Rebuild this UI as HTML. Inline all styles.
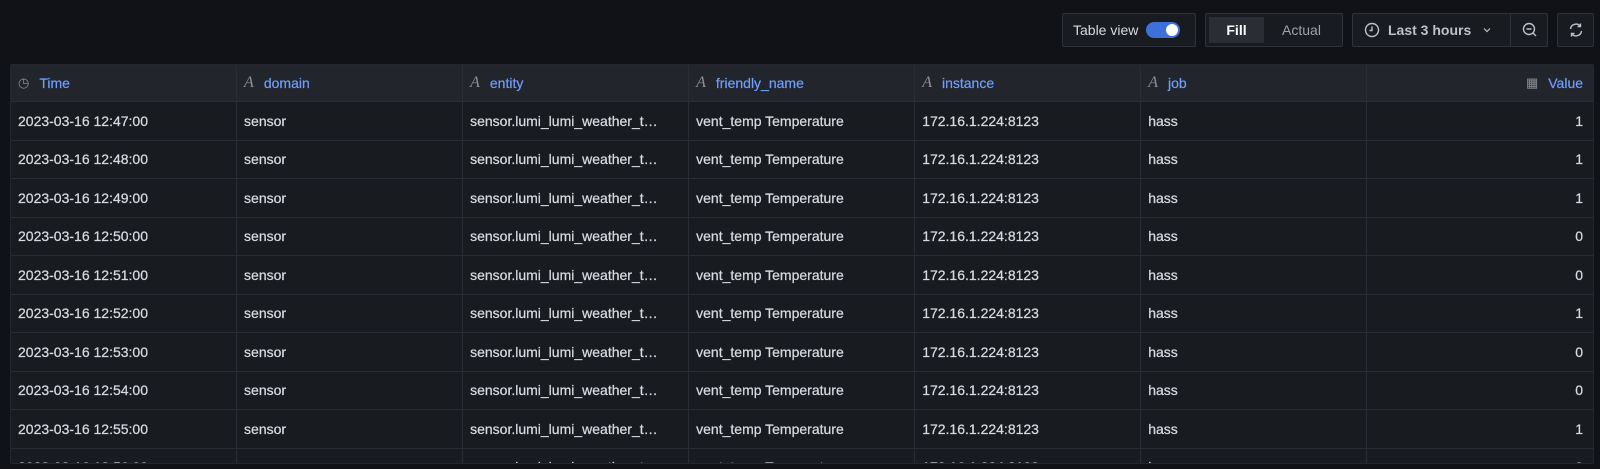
<!DOCTYPE html>
<html><head><style>
*{box-sizing:border-box;margin:0;padding:0}
body{width:1600px;height:469px;background:#111217;font-family:"Liberation Sans",sans-serif;color:#ccccdc;overflow:hidden;position:relative}
.ctl{position:absolute;top:13px;height:34px;border:1px solid #2f3238;border-radius:2px;background:#181b1f;display:flex;align-items:center;font-size:14px}
.tbl{position:absolute;left:10px;top:64px;width:1584px;height:400px;background:#181b1f;border:1px solid #24272d;overflow:hidden;border-radius:2px}
.row{display:flex;height:38.5px;border-bottom:1px solid #2a2d33;align-items:center;font-size:14px}
.hdr{height:37px;background:#22252b;color:#6e9fff}
.c{width:226.3px;height:100%;display:flex;align-items:center;padding-left:7px;border-right:1px solid #2a2d33;white-space:nowrap;overflow:hidden;color:#d8d9e0;-webkit-text-stroke:0.25px #d8d9e0}
.hdr .c{color:#6e9fff;-webkit-text-stroke:0.2px #6e9fff}
.c:last-child{border-right:none;justify-content:flex-end;padding-right:10px;width:226px}
.ic{color:#8e8e9a;font-style:italic;font-family:"Liberation Serif",serif;font-size:16px;margin-right:10px;-webkit-text-stroke:0}
</style></head><body>
<div class="ctl" style="left:1062px;width:134px;padding-left:10px;color:#d8d9e0">Table view
<span style="margin-left:8px;width:34px;height:16px;border-radius:8px;background:#3d71d9;position:relative;display:inline-block"><span style="position:absolute;right:2px;top:2px;width:12px;height:12px;border-radius:6px;background:#fff"></span></span></div>
<div class="ctl" style="left:1205px;width:138px;padding:3px">
<span style="width:55px;height:26px;background:#2a2d33;display:flex;align-items:center;justify-content:center;color:#fff;font-weight:bold">Fill</span>
<span style="flex:1;text-align:center;color:#9fa1ab">Actual</span></div>
<div class="ctl" style="left:1352px;width:196px;color:#bfc1ca">
<svg width="16" height="16" viewBox="0 0 16 16" style="margin:0 8px 0 11px"><circle cx="8" cy="8" r="6.5" fill="none" stroke="#bfc1ca" stroke-width="1.4"/><path d="M8 4.5V8.5H5.5" fill="none" stroke="#bfc1ca" stroke-width="1.4"/></svg>
<span style="font-weight:bold">Last 3 hours</span><svg width="8" height="6" viewBox="0 0 8 6" style="margin-left:12px"><path d="M1 1.5L4 4.5L7 1.5" fill="none" stroke="#bfc1ca" stroke-width="1.2"/></svg>
<span style="position:absolute;left:157px;top:0;bottom:0;border-left:1px solid #2f3238;width:38px;display:flex;align-items:center;justify-content:center"><svg width="16" height="16" viewBox="0 0 16 16"><circle cx="7" cy="7" r="5.5" fill="none" stroke="#bfc1ca" stroke-width="1.4"/><path d="M4.5 7H9.5M11 11L14 14" stroke="#bfc1ca" stroke-width="1.4"/></svg></span></div>
<div class="ctl" style="left:1557px;width:37px;justify-content:center"><svg width="16" height="16" viewBox="0 0 16 16"><path d="M2.5 7A5.5 5.5 0 0 1 12.5 4.5M13.5 9A5.5 5.5 0 0 1 3.5 11.5M12.5 1.5V4.5H9.5M3.5 14.5V11.5H6.5" fill="none" stroke="#bfc1ca" stroke-width="1.4"/></svg></div>
<div class="tbl">
<div class="row hdr"><div class="c"><span class="ic" style="font-style:normal;font-size:13px">&#9719;</span>Time</div><div class="c"><span class="ic">A</span>domain</div><div class="c"><span class="ic">A</span>entity</div><div class="c"><span class="ic">A</span>friendly_name</div><div class="c"><span class="ic">A</span>instance</div><div class="c"><span class="ic">A</span>job</div><div class="c"><span class="ic" style="font-style:normal;font-size:13px">&#9638;</span>Value</div></div>
<div class="row"><div class="c">2023-03-16 12:47:00</div><div class="c">sensor</div><div class="c">sensor.lumi_lumi_weather_t…</div><div class="c">vent_temp Temperature</div><div class="c">172.16.1.224:8123</div><div class="c">hass</div><div class="c">1</div></div>
<div class="row"><div class="c">2023-03-16 12:48:00</div><div class="c">sensor</div><div class="c">sensor.lumi_lumi_weather_t…</div><div class="c">vent_temp Temperature</div><div class="c">172.16.1.224:8123</div><div class="c">hass</div><div class="c">1</div></div>
<div class="row"><div class="c">2023-03-16 12:49:00</div><div class="c">sensor</div><div class="c">sensor.lumi_lumi_weather_t…</div><div class="c">vent_temp Temperature</div><div class="c">172.16.1.224:8123</div><div class="c">hass</div><div class="c">1</div></div>
<div class="row"><div class="c">2023-03-16 12:50:00</div><div class="c">sensor</div><div class="c">sensor.lumi_lumi_weather_t…</div><div class="c">vent_temp Temperature</div><div class="c">172.16.1.224:8123</div><div class="c">hass</div><div class="c">0</div></div>
<div class="row"><div class="c">2023-03-16 12:51:00</div><div class="c">sensor</div><div class="c">sensor.lumi_lumi_weather_t…</div><div class="c">vent_temp Temperature</div><div class="c">172.16.1.224:8123</div><div class="c">hass</div><div class="c">0</div></div>
<div class="row"><div class="c">2023-03-16 12:52:00</div><div class="c">sensor</div><div class="c">sensor.lumi_lumi_weather_t…</div><div class="c">vent_temp Temperature</div><div class="c">172.16.1.224:8123</div><div class="c">hass</div><div class="c">1</div></div>
<div class="row"><div class="c">2023-03-16 12:53:00</div><div class="c">sensor</div><div class="c">sensor.lumi_lumi_weather_t…</div><div class="c">vent_temp Temperature</div><div class="c">172.16.1.224:8123</div><div class="c">hass</div><div class="c">0</div></div>
<div class="row"><div class="c">2023-03-16 12:54:00</div><div class="c">sensor</div><div class="c">sensor.lumi_lumi_weather_t…</div><div class="c">vent_temp Temperature</div><div class="c">172.16.1.224:8123</div><div class="c">hass</div><div class="c">0</div></div>
<div class="row"><div class="c">2023-03-16 12:55:00</div><div class="c">sensor</div><div class="c">sensor.lumi_lumi_weather_t…</div><div class="c">vent_temp Temperature</div><div class="c">172.16.1.224:8123</div><div class="c">hass</div><div class="c">1</div></div>
<div class="row"><div class="c">2023-03-16 12:56:00</div><div class="c">sensor</div><div class="c">sensor.lumi_lumi_weather_t…</div><div class="c">vent_temp Temperature</div><div class="c">172.16.1.224:8123</div><div class="c">hass</div><div class="c">0</div></div>
</div>
</body></html>
